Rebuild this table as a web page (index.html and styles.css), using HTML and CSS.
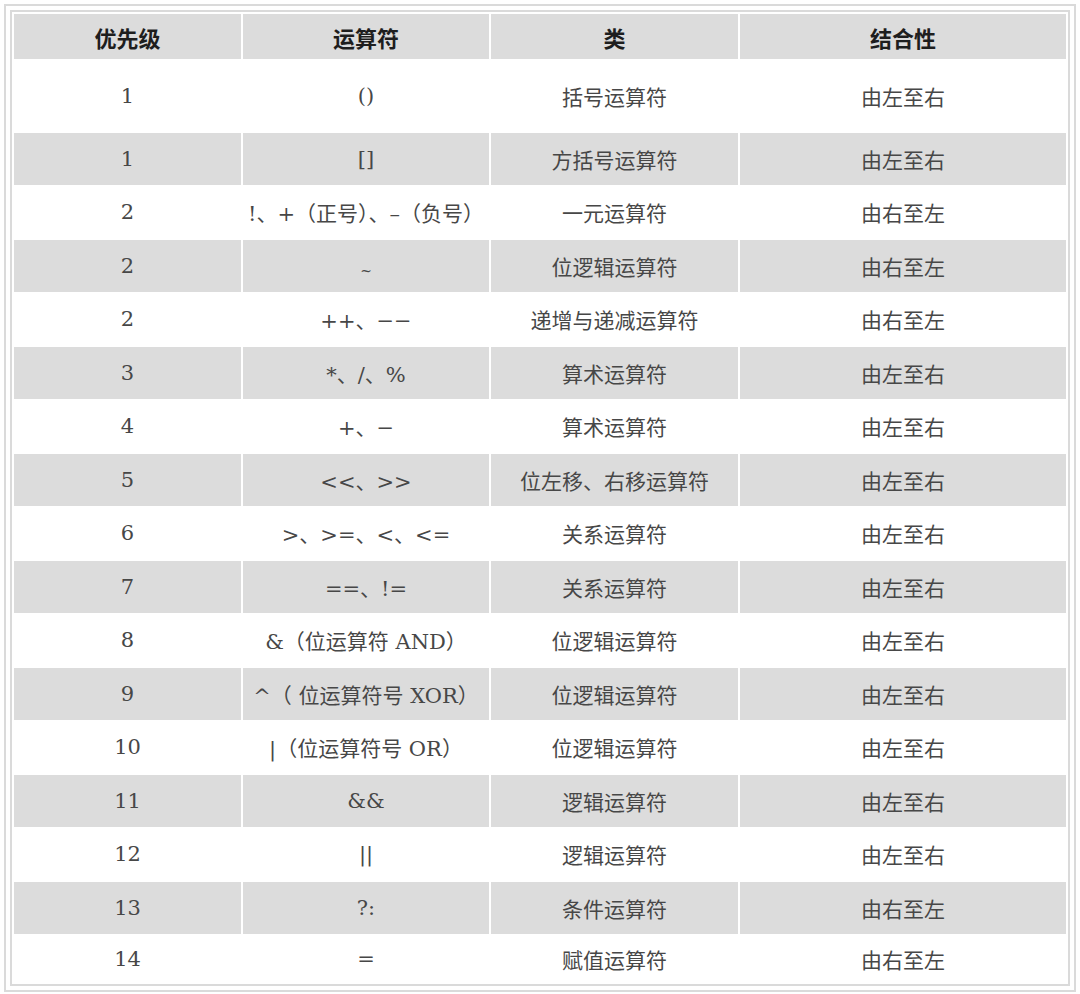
FILE: index.html
```html
<!DOCTYPE html>
<html lang="zh-CN">
<head>
<meta charset="utf-8">
<title>运算符优先级</title>
<link rel="stylesheet" href="styles.css">
</head>
<body>
<div class="frame">
<table class="ops">
<colgroup>
<col class="c1"><col class="c2"><col class="c3"><col class="c4">
</colgroup>
<thead>
<tr><th>优先级</th><th>运算符</th><th>类</th><th>结合性</th></tr>
</thead>
<tbody>
<tr class="first"><td>1</td><td>()</td><td>括号运算符</td><td>由左至右</td></tr>
<tr class="alt"><td>1</td><td>[]</td><td>方括号运算符</td><td>由左至右</td></tr>
<tr><td>2</td><td>!、+（正号）、–（负号）</td><td>一元运算符</td><td>由右至左</td></tr>
<tr class="alt"><td>2</td><td><span class="tilde">~</span></td><td>位逻辑运算符</td><td>由右至左</td></tr>
<tr><td>2</td><td>++、−−</td><td>递增与递减运算符</td><td>由右至左</td></tr>
<tr class="alt"><td>3</td><td>*、/、%</td><td>算术运算符</td><td>由左至右</td></tr>
<tr><td>4</td><td>+、−</td><td>算术运算符</td><td>由左至右</td></tr>
<tr class="alt"><td>5</td><td>&lt;&lt;、&gt;&gt;</td><td>位左移、右移运算符</td><td>由左至右</td></tr>
<tr><td>6</td><td>&gt;、&gt;=、&lt;、&lt;=</td><td>关系运算符</td><td>由左至右</td></tr>
<tr class="alt"><td>7</td><td>==、!=</td><td>关系运算符</td><td>由左至右</td></tr>
<tr><td>8</td><td>&amp;（位运算符 AND）</td><td>位逻辑运算符</td><td>由左至右</td></tr>
<tr class="alt"><td>9</td><td>^（ 位运算符号 XOR）</td><td>位逻辑运算符</td><td>由左至右</td></tr>
<tr><td>10</td><td>|（位运算符号 OR）</td><td>位逻辑运算符</td><td>由左至右</td></tr>
<tr class="alt"><td>11</td><td>&amp;&amp;</td><td>逻辑运算符</td><td>由左至右</td></tr>
<tr><td>12</td><td>||</td><td>逻辑运算符</td><td>由左至右</td></tr>
<tr class="alt"><td>13</td><td>?:</td><td>条件运算符</td><td>由右至左</td></tr>
<tr class="last"><td>14</td><td>=</td><td>赋值运算符</td><td>由右至左</td></tr>
</tbody>
</table>
</div>
</body>
</html>
```

FILE: styles.css
```css
html, body {
  margin: 0;
  padding: 0;
  background: #ffffff;
}

.frame {
  margin: 4px;
  border: 2px solid #dadada;
  padding: 4px;
}

.ops {
  width: 100%;
  table-layout: fixed;
  border: 2px solid #dadada;
  border-spacing: 2px;
  font-family: "DejaVu Serif", "Noto Sans CJK SC", serif;
  font-size: 21px;
  color: #474747;
}

.c1 { width: 227px; }
.c2 { width: 246px; }
.c3 { width: 247px; }
.c4 { width: 326px; }

.ops th,
.ops td {
  padding: 0;
  text-align: center;
  vertical-align: middle;
  white-space: nowrap;
}

.ops th {
  height: 45px;
  background: #dcdcdc;
  color: #1e1e1e;
  font-family: "Noto Sans CJK SC", sans-serif;
  font-weight: bold;
  font-size: 22px;
}

.ops td {
  height: 51.5px;
  background: #ffffff;
}

.ops tr.first td {
  height: 70px;
}

.ops tr.last td {
  height: 46px;
}

.ops tr.alt td {
  background: #dcdcdc;
}

.tilde {
  font-size: 14px;
  position: relative;
  top: 3px;
}
```
